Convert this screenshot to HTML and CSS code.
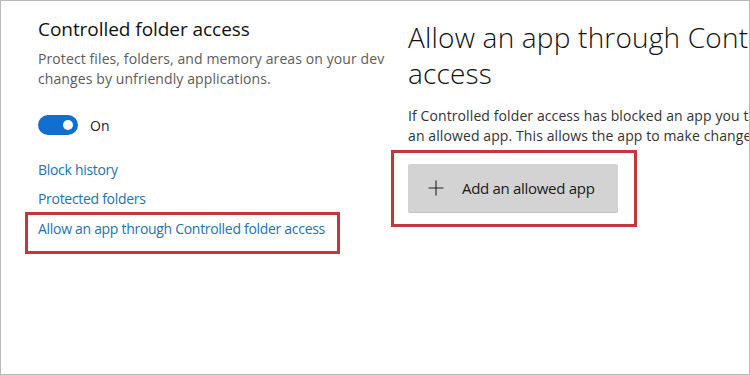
FILE: index.html
```html
<!DOCTYPE html>
<html lang="en">

<head>
    <meta charset="UTF-8">
    <meta name="viewport" content="width=device-width, initial-scale=1.0">
    <title>Controlled folder access</title>

    <link rel="stylesheet" href="styles.css">
</head>

<body>
    <div class="frame">
        <div class="pane-left">
            <h2 class="title">Controlled folder access</h2>
            <p class="desc">Protect files, folders, and memory areas on your device from unauthorized<br>changes by unfriendly applications.</p>

            <div class="switch-row">
                <span class="switch"></span>
                <span class="switch-label">On</span>
            </div>

            <div class="links">
                <a class="link">Block history</a>
                <a class="link">Protected folders</a>
                <div class="mark mark-link">
                    <a class="link">Allow an app through Controlled folder access</a>
                </div>
            </div>
        </div>

        <div class="pane-right">
            <h1 class="heading">Allow an app through Controlled folder<br>access</h1>
            <p class="text">If Controlled folder access has blocked an app you trust, you can add it as<br>an allowed app. This allows the app to make changes to protected folders.</p>

            <div class="mark mark-btn">
                <button class="add-btn">
                    <svg class="plus" width="16" height="16" viewBox="0 0 16 16">
                        <path d="M8 0.5V15.5M0.5 8H15.5" stroke="#222" stroke-width="1.1" fill="none" />
                    </svg>
                    <span>Add an allowed app</span>
                </button>
            </div>
        </div>
    </div>
</body>

</html>
```

FILE: styles.css
```css
body {
    margin: 0;
    font-family: "Open Sans", "Noto Sans", sans-serif;
    background: #fff;
}

.frame {
    box-sizing: border-box;
    width: 750px;
    height: 375px;
    border: 1px solid #b9b9b9;
    display: grid;
    grid-template-columns: 384px 1fr;
    overflow: hidden;
}

.pane-left,
.pane-right {
    overflow: hidden;
    white-space: nowrap;
}

.pane-left {
    padding: 15px 0 0 37px;
}

.title {
    margin: 0;
    font-size: 19px;
    font-weight: 400;
    line-height: 26px;
    color: #111;
    letter-spacing: -0.05px;
}

.desc {
    margin: 7px 0 0;
    font-size: 14px;
    line-height: 20px;
    color: #5c5c5c;
    letter-spacing: 0.1px;
}

.switch-row {
    display: flex;
    align-items: center;
    gap: 12px;
    margin-top: 26px;
}

.switch {
    display: flex;
    align-items: center;
    justify-content: flex-end;
    box-sizing: border-box;
    width: 40px;
    height: 20px;
    padding-right: 5px;
    border-radius: 10px;
    background: #1170cf;
}

.switch::after {
    content: "";
    width: 10px;
    height: 10px;
    border-radius: 50%;
    background: #fff;
}

.switch-label {
    font-size: 14px;
    color: #222;
}

.links {
    display: flex;
    flex-direction: column;
    align-items: flex-start;
    gap: 9px;
    margin-top: 25px;
}

.link {
    font-size: 14px;
    line-height: 20px;
    color: #2274ad;
    letter-spacing: -0.3px;
}

.mark {
    border: 3px solid #c1373b;
}

.mark-link {
    margin: -6px 0 0 -13px;
    padding: 2px 12px 12px 10px;
}

.pane-right {
    padding: 18px 0 0 6px;
}

.heading {
    margin: 0 0 0 17px;
    font-size: 28px;
    font-weight: 300;
    line-height: 36px;
    color: #111;
    letter-spacing: 0.2px;
}

.text {
    margin: 15px 0 0 17px;
    font-size: 14px;
    line-height: 20px;
    color: #333;
    letter-spacing: 0.1px;
}

.mark-btn {
    display: inline-block;
    margin-top: 4px;
    padding: 11px 16px 12px 14px;
}

.add-btn {
    all: unset;
    display: flex;
    align-items: center;
    box-sizing: border-box;
    width: 210px;
    height: 48px;
    padding-left: 20px;
    gap: 18px;
    background: #d3d3d3;
    border-radius: 2px;
    box-shadow: 0 1px 0 #c4c4c4;
    font-size: 15px;
    color: #1a1a1a;
    letter-spacing: -0.3px;
}
```
